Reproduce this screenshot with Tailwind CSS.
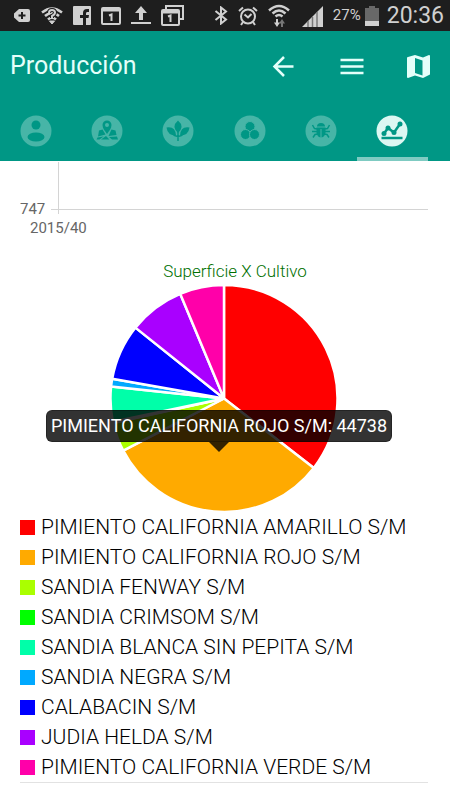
<!DOCTYPE html>
<html lang="es">
<head>
<meta charset="utf-8">
<meta name="viewport" content="width=device-width, initial-scale=1">
<title>Producción</title>
<script src="https://cdn.jsdelivr.net/npm/@tailwindcss/browser@4"></script>
</head>
<body class="bg-white font-[Roboto,'Liberation_Sans',sans-serif] text-[#222]">

<!-- Device status bar -->
<div class="flex h-[31px] items-center justify-between bg-[#1e1e1e] pl-[14px] pr-[6px] text-[#d0d0d0]">
  <div class="flex items-center gap-[10px]">
    <svg class="h-[14px] w-[17px]" viewBox="0 0 17 14" fill="currentColor"><path d="M5 0h9q2 0 2 2v9q0 2-2 2H5L0 8.500V4.500z"/><path d="M8 3v7M4.500 6.500h7" stroke="#1e1e1e" stroke-width="2"/></svg>
    <svg class="h-[18px] w-[22px]" viewBox="0 0 22 18" fill="none" stroke="currentColor"><path d="M1 5.500Q11-2.500 21 5.500M4 9Q11 3 18 9M7 12.500Q11 9 15 12.500" stroke-width="2.500"/><path d="M8.500 14h5L11 17z" fill="currentColor"/><path d="M8 6q0-3 3-3t3 2.500q0 2-3 3.500v2" stroke="#1e1e1e" stroke-width="4"/><path d="M8 6q0-3 3-3t3 2.500q0 2-3 3.500v2" stroke-width="2"/></svg>
    <svg class="h-[19px] w-[18px]" viewBox="0 0 18 19"><rect width="18" height="19" rx="1" fill="currentColor"/><path d="M10 19v-7H7V9h3V7q0-4 4-4h2v3h-2q-1 0-1 1.500V9h3l-.5 3H13v7z" fill="#1e1e1e"/></svg>
    <svg class="h-[18px] w-[20px]" viewBox="0 0 20 18" fill="none" stroke="currentColor"><rect x="1" y="1" width="18" height="16" rx="1" stroke-width="2"/><path d="M1 3h18" stroke-width="3"/><path d="M8 8.500l2.500-1V14" stroke-width="2"/></svg>
    <svg class="h-[19px] w-[20px]" viewBox="0 0 20 19" fill="currentColor"><path d="M10 0l6 7h-4v7H8V7H4zM0 16h20v2H0z"/></svg>
    <svg class="h-[21px] w-[23px]" viewBox="0 0 23 21" fill="none" stroke="currentColor"><path d="M5 4V1h17v13h-3" stroke-width="2"/><rect x="1" y="5" width="17" height="15" rx="1" stroke-width="2"/><path d="M1 7h17" stroke-width="3"/><path d="M7 11.500l2.500-1V17" stroke-width="2"/></svg>
  </div>
  <div class="flex items-center">
    <svg class="mr-[10px] h-[19px] w-[14px]" viewBox="0 0 14 19" fill="none" stroke="currentColor" stroke-width="2"><path d="M1.500 5L12 13.500l-5 4v-16l5 4L1.500 14"/></svg>
    <svg class="mr-[10px] h-[20px] w-[20px]" viewBox="0 0 20 20" fill="none" stroke="currentColor" stroke-width="2"><circle cx="10" cy="10.500" r="7"/><path d="M6.500 8.500l3.500 3 3.500-3.500M1 5l4-3.500M19 5l-4-3.500M5 16l-2 3M15 16l2 3" /></svg>
    <svg class="mr-[12px] h-[24px] w-[22px]" viewBox="0 0 22 24" fill="none" stroke="currentColor"><path d="M1 6.500Q11-2.500 21 6.500M4.500 9.500Q11 3.500 17.500 9.500M7.500 12.500Q11 9.500 14.500 12.500" stroke-width="2.500"/><path d="M9 15v4" stroke-width="2"/><path d="M14 23v-4" stroke="#777" stroke-width="2"/><path d="M6 18.500h6L9 23z" fill="currentColor" stroke="none"/><path d="M11 19.500h6L14 15z" fill="#777" stroke="none"/></svg>
    <svg class="mr-[10px] h-[22px] w-[21px]" viewBox="0 0 21 22"><path d="M0 22L21 1v21z" fill="currentColor"/><path d="M6 16v6M10.500 12v10M15 7v15" stroke="#777" stroke-width="1.500"/></svg>
    <span class="mr-[4px] text-[15px]">27%</span>
    <svg class="mr-[8px] h-[20px] w-[14px]" viewBox="0 0 14 20"><path d="M4 0h6v2h4v18H0V2h4z" fill="#686868"/><path d="M0 15h14v5H0z" fill="currentColor"/></svg>
    <span class="text-[23px] leading-[30px]">20:36</span>
  </div>
</div>

<!-- App bar -->
<header class="bg-[#009785]">
  <div class="flex h-[70px] items-center pl-[10px] pr-[17px] text-[#e4fffa]">
    <h1 class="flex-1 text-[25px]">Producción</h1>
    <div class="flex items-center gap-[40px]">
      <button aria-label="Atrás" class="h-[28px] w-[28px]"><svg viewBox="0 0 28 28" fill="none" stroke="currentColor" stroke-width="2.500"><path d="M24.500 14.500H6M15 5l-9.500 9.500L15 24"/></svg></button>
      <button aria-label="Menú" class="h-[28px] w-[28px]"><svg viewBox="0 0 28 28" fill="none" stroke="currentColor" stroke-width="2.500"><path d="M3.500 8h23M3.500 14.500h23M3.500 21h23"/></svg></button>
      <button aria-label="Mapa" class="h-[28px] w-[28px]"><svg viewBox="0 0 28 28" fill="currentColor" fill-rule="evenodd"><path d="M2 6q0-1 1-1l7-2 8 2.500L24 3q1 0 1 1v18q0 1-1 1L18 26l-8-2.500L3 26q-1 0-1-1zM10 6v15l7.500 2.500v-15z"/></svg></button>
    </div>
  </div>
  <nav class="mr-[22px] grid h-[60px] grid-cols-6 text-[#47b5a7]">
    <a href="#perfil" aria-label="Perfil" class="flex items-center justify-center border-b-4 border-transparent pt-1"><svg class="h-8 w-8" viewBox="0 0 32 32"><circle cx="16" cy="16" r="15.500" fill="currentColor"/><g fill="#009785"><circle cx="16" cy="10" r="4.500"/><ellipse cx="16" cy="22" rx="8.500" ry="4.500"/></g></svg></a>
    <a href="#fincas" aria-label="Fincas" class="flex items-center justify-center border-b-4 border-transparent pt-1"><svg class="h-8 w-8" viewBox="0 0 32 32"><circle cx="16" cy="16" r="15.500" fill="currentColor"/><path fill="#009785" fill-rule="evenodd" d="M16 19c-2-3-4.500-5.500-4.500-9a4.500 4.500 0 019 0c0 3.500-2.500 6-4.500 9zM16 8a2 2 0 100 4 2 2 0 000-4z"/><g fill="#009785"><path d="M8 15.500l3.500-1 3 5-7.500 2zM20.500 14.500l4 1 1 4.500-8 1zM6.500 22.500l6-1-4 3H5.500zM10 24.500l5-3.500 3.500 3.500zM18 22l8-.5 1 3h-6z"/></g></svg></a>
    <a href="#cultivos" aria-label="Cultivos" class="flex items-center justify-center border-b-4 border-transparent pt-1"><svg class="h-8 w-8" viewBox="0 0 32 32"><circle cx="16" cy="16" r="15.500" fill="currentColor"/><g fill="#009785"><path d="M16 5.500q7 6 0 12.500-7-6.500 0-12.500zM4.500 12.500q9-1.500 9.500 8-8.500 0-9.500-8zM27.500 12.500q-9-1.500-9.500 8 8.500 0 9.500-8z"/></g><path d="M16 15v11M11 19q1 2 5 2.500 4-.5 5-2.500" fill="none" stroke="#009785" stroke-width="1.500"/></svg></a>
    <a href="#produccion" aria-label="Producción" class="flex items-center justify-center border-b-4 border-transparent pt-1"><svg class="h-8 w-8" viewBox="0 0 32 32"><circle cx="16" cy="16" r="15.500" fill="currentColor"/><g fill="#009785" stroke="#47b5a7"><circle cx="16" cy="11.500" r="5"/><circle cx="11.500" cy="19.500" r="5"/><circle cx="20.500" cy="19.500" r="5"/></g></svg></a>
    <a href="#plagas" aria-label="Plagas" class="flex items-center justify-center border-b-4 border-transparent pt-1"><svg class="h-8 w-8" viewBox="0 0 32 32"><circle cx="16" cy="16" r="15.500" fill="currentColor"/><path d="M12 11.500a4 3.500 0 018 0zM11.500 12.500H20.500V18q-1 4-4 4.500V14h-1v8.500q-3-.5-4-4.500z" fill="#009785"/><path d="M7.500 10l2 3.500 3 .5M7 16.500h5M8 22.500l2-3 3-.5M24.500 10l-2 3.500-3 .5M25 16.500h-5M24 22.500l-2-3-3-.5" fill="none" stroke="#009785" stroke-width="1.500"/></svg></a>
    <a href="#graficas" aria-label="Gráficas" aria-current="page" class="flex items-center justify-center border-b-4 border-[#7fcbc2] pt-1 text-[#dcf7f2]"><svg class="h-8 w-8" viewBox="0 0 32 32"><circle cx="16" cy="16" r="15.500" fill="currentColor"/><g fill="none" stroke="#009785"><path d="M8 18.500l4-5.500 6 4.500 6-8.500" stroke-width="2.500"/><path d="M5.500 23h21" stroke-width="2.500"/></g><g fill="#009785"><circle cx="8" cy="18.500" r="2.500"/><circle cx="12" cy="13" r="2.500"/><circle cx="18" cy="17.500" r="2.500"/><circle cx="24" cy="9" r="2.500"/></g></svg></a>
  </nav>
</header>

<main class="pl-5 pr-[22px]">
  <!-- Lower edge of the line chart -->
  <svg class="block h-[96px] w-full" role="img" aria-label="Eje 2015/40">
    <g stroke="#d4d4d4" stroke-width="1" shape-rendering="crispEdges"><line x1="38" y1="1" x2="38" y2="53"/><line x1="31" y1="48" x2="100%" y2="48"/></g>
    <g fill="#666" font-size="15"><text x="0" y="53">747</text><text x="10" y="72">2015/40</text></g>
  </svg>

  <section>
    <h2 class="pl-[22px] text-center text-[17px] leading-[28px] font-light text-[#007000]">Superficie X Cultivo</h2>
    <div class="relative mx-auto w-[346px]">
      <svg class="mx-auto block h-[227px] w-[228px]" viewBox="-114 -114 228 228" role="img" aria-label="Superficie por cultivo">
        <g stroke="#fff" stroke-width="2.500" stroke-linejoin="round">
          <path fill="#f00" d="M0 0V-114A114 114 0 0190.200 69.700z"/>
          <path fill="#fa0" d="M0 0L90.200 69.700A114 114 0 01-101.200 52.400z"/>
          <path fill="#af0" d="M0 0L-101.200 52.400A114 114 0 01-111.300 24.600z"/>
          <path fill="#0f0" stroke-width="2" d="M0 0L-111.300 24.600A114 114 0 01-111.600 23.300z"/>
          <path fill="#00ffa9" d="M0 0L-111.600 23.300A114 114 0 01-113.400-12z"/>
          <path fill="#00a9ff" d="M0 0L-113.400-12A114 114 0 01-112.300-19.800z"/>
          <path fill="#00f" d="M0 0L-112.300-19.800A114 114 0 01-89-71.200z"/>
          <path fill="#a900ff" d="M0 0L-89-71.200A114 114 0 01-44-105.200z"/>
          <path fill="#ff00a9" d="M0 0L-44-105.200A114 114 0 010-114z"/>
        </g>
      </svg>
      <div class="absolute top-[125px] -left-[5px] w-full" role="tooltip">
        <div class="rounded-md border border-black/30 bg-black/80 text-center text-[18px] leading-[30px] whitespace-nowrap text-white">PIMIENTO CALIFORNIA ROJO S/M: 44738</div>
        <svg class="mx-auto block h-[10px] w-[20px]" viewBox="0 0 20 10"><path d="M0 0h20L10 10z" fill="#000" fill-opacity=".8"/></svg>
      </div>
    </div>
    <ul class="border-b border-[#e2e2e2] text-[21px] leading-[30px] font-light text-black">
      <li class="flex items-center gap-[6px]"><span class="h-[15px] w-[15px] bg-[#f00]"></span>PIMIENTO CALIFORNIA AMARILLO S/M</li>
      <li class="flex items-center gap-[6px]"><span class="h-[15px] w-[15px] bg-[#fa0]"></span>PIMIENTO CALIFORNIA ROJO S/M</li>
      <li class="flex items-center gap-[6px]"><span class="h-[15px] w-[15px] bg-[#af0]"></span>SANDIA FENWAY S/M</li>
      <li class="flex items-center gap-[6px]"><span class="h-[15px] w-[15px] bg-[#0f0]"></span>SANDIA CRIMSOM S/M</li>
      <li class="flex items-center gap-[6px]"><span class="h-[15px] w-[15px] bg-[#00ffa9]"></span>SANDIA BLANCA SIN PEPITA S/M</li>
      <li class="flex items-center gap-[6px]"><span class="h-[15px] w-[15px] bg-[#00a9ff]"></span>SANDIA NEGRA S/M</li>
      <li class="flex items-center gap-[6px]"><span class="h-[15px] w-[15px] bg-[#00f]"></span>CALABACIN S/M</li>
      <li class="flex items-center gap-[6px]"><span class="h-[15px] w-[15px] bg-[#a900ff]"></span>JUDIA HELDA S/M</li>
      <li class="flex items-center gap-[6px]"><span class="h-[15px] w-[15px] bg-[#ff00a9]"></span>PIMIENTO CALIFORNIA VERDE S/M</li>
    </ul>
  </section>
</main>
</body>
</html>
